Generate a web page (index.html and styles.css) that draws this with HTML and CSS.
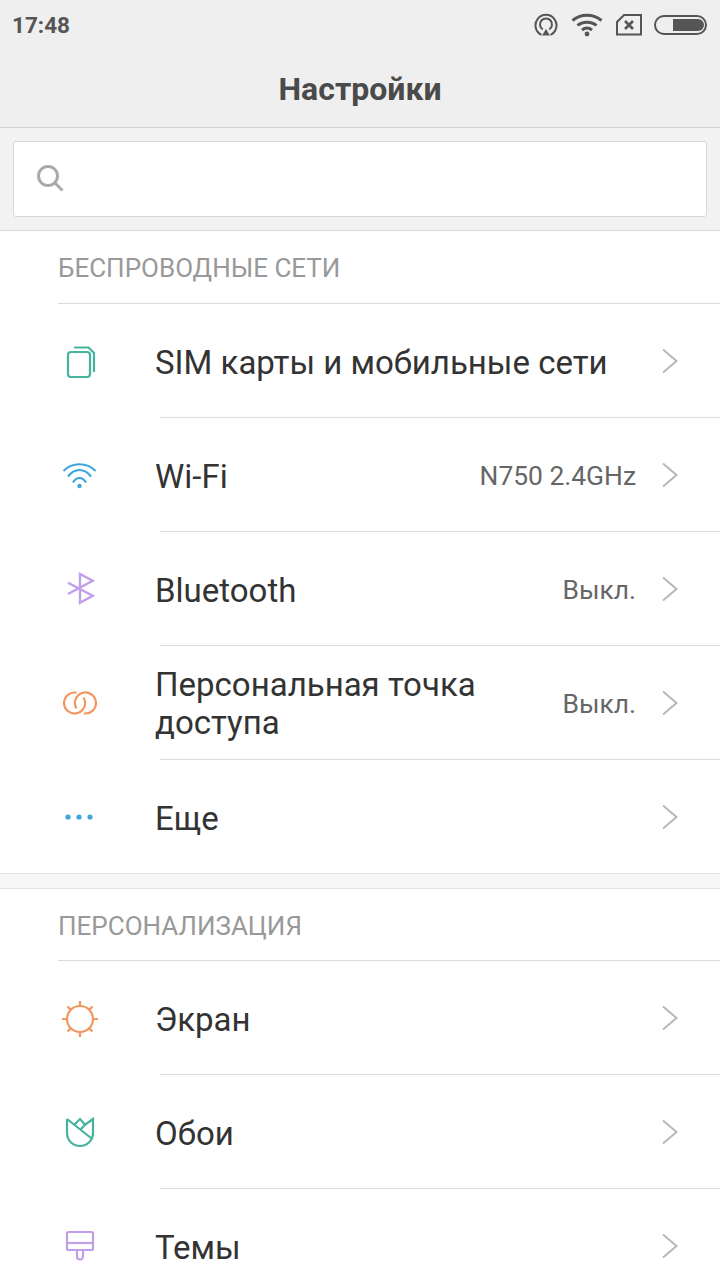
FILE: index.html
```html
<!DOCTYPE html>
<html lang="ru">
<head>
    <meta charset="UTF-8">
    <meta name="viewport" content="width=device-width, initial-scale=1.0">
    <title>Настройки</title>
    <link rel="stylesheet" href="styles.css">
</head>
<body>
    <div class="top">
        <div class="status">
            <span class="time">17:48</span>
            <div class="status-icons">
                <svg class="st-sync" width="24" height="24" viewBox="0 0 24 24" fill="none" stroke="#555" stroke-width="2">
                    <path d="M7.500 21.800A10.500 10.500 0 1 1 16.500 21.800"/>
                    <path d="M8.800 16.500A6 6 0 1 1 15.200 16.500"/>
                    <path d="M12 16l4 6.500H8z" fill="#555" stroke="none"/>
                </svg>
                <svg class="st-wifi" width="32" height="24" viewBox="0 0 32 24" fill="none" stroke="#555" stroke-width="3">
                    <path d="M1.500 7.500C9.500 .5 22.500 .5 30.500 7.500"/>
                    <path d="M6.500 12.500C11.500 8 20.500 8 25.500 12.500"/>
                    <path d="M11 17C14 14.600 18 14.600 21 17"/>
                    <circle cx="16" cy="21" r="2.400" fill="#555" stroke="none"/>
                </svg>
                <svg class="st-sim" width="26" height="22" viewBox="0 0 26 22" fill="none" stroke="#555" stroke-width="2">
                    <path d="M8 1H25V20.500H1V8z"/>
                    <path d="M9 7l8 8M17 7l-8 8" stroke-width="2.600"/>
                </svg>
                <div class="battery"><div class="battery-fill"></div></div>
            </div>
        </div>
        <h1 class="title">Настройки</h1>
    </div>

    <div class="search-wrap">
        <div class="search">
            <svg width="30" height="30" viewBox="0 0 30 30" fill="none" stroke="#aaa" stroke-width="3">
                <circle cx="12" cy="12" r="9.500"/>
                <path d="M19 19l7.500 7.500"/>
            </svg>
        </div>
    </div>

    <div class="section-title">БЕСПРОВОДНЫЕ СЕТИ</div>
    <div class="list">
        <div class="row">
            <svg class="icon" width="44" height="44" viewBox="0 0 44 44" fill="none" stroke="#45b39d" stroke-width="2.200">
                <rect x="10" y="13" width="22" height="25" rx="3"/>
                <path d="M16 8.500H30.500L36 14V33"/>
            </svg>
            <span class="name">SIM карты и мобильные сети</span>
            <svg class="arrow" width="18" height="26" viewBox="0 0 18 26"><path d="M2 1.500L15.500 13 2 24.500"/></svg>
        </div>
        <div class="row">
            <svg class="icon" width="44" height="44" viewBox="0 0 44 44" fill="none" stroke="#3ca6dc" stroke-width="2.200">
                <path d="M5.500 18C14 9 29 9 37.500 18"/>
                <path d="M10 23.500C16.500 14.800 26.500 14.800 33 23.500"/>
                <path d="M15 29.500C18.500 23.500 24.500 23.500 28 29.500"/>
                <circle cx="21.500" cy="33" r="2.200" fill="#3ca6dc" stroke="none"/>
            </svg>
            <span class="name">Wi-Fi</span>
            <span class="value">N750 2.4GHz</span>
            <svg class="arrow" width="18" height="26" viewBox="0 0 18 26"><path d="M2 1.500L15.500 13 2 24.500"/></svg>
        </div>
        <div class="row">
            <svg class="icon" width="44" height="44" viewBox="0 0 44 44" fill="none" stroke="#c09eea" stroke-width="2.400">
                <path d="M10 15.700L34.700 28.700 22 35.700V7L34.700 13.700 10 27"/>
            </svg>
            <span class="name">Bluetooth</span>
            <span class="value">Выкл.</span>
            <svg class="arrow" width="18" height="26" viewBox="0 0 18 26"><path d="M2 1.500L15.500 13 2 24.500"/></svg>
        </div>
        <div class="row">
            <svg class="icon" width="44" height="44" viewBox="0 0 44 44" fill="none" stroke="#f4965f" stroke-width="2.200">
                <path d="M18.500 11.700A10.500 10.500 0 1 0 25.500 16.500"/>
                <path d="M26 32.400A10.500 10.500 0 1 0 18.500 27.500"/>
            </svg>
            <span class="name name-two">Персональная точка<br>доступа</span>
            <span class="value">Выкл.</span>
            <svg class="arrow" width="18" height="26" viewBox="0 0 18 26"><path d="M2 1.500L15.500 13 2 24.500"/></svg>
        </div>
        <div class="row">
            <svg class="icon" width="44" height="44" viewBox="0 0 44 44" fill="#3ca6dc">
                <circle cx="10" cy="22" r="2.600"/>
                <circle cx="21" cy="22" r="2.600"/>
                <circle cx="32" cy="22" r="2.600"/>
            </svg>
            <span class="name">Еще</span>
            <svg class="arrow" width="18" height="26" viewBox="0 0 18 26"><path d="M2 1.500L15.500 13 2 24.500"/></svg>
        </div>
    </div>

    <div class="gap"></div>

    <div class="section-title section-second">ПЕРСОНАЛИЗАЦИЯ</div>
    <div class="list">
        <div class="row">
            <svg class="icon" width="44" height="44" viewBox="0 0 44 44" fill="none" stroke="#f4965f" stroke-width="2.200">
                <circle cx="22" cy="23" r="13"/>
                <path d="M22 5V10M22 36V41M4 23H9M35 23H40M9.500 10.500L13 14M31 32L34.500 35.500M34.500 10.500L31 14M13 32L9.500 35.500"/>
            </svg>
            <span class="name">Экран</span>
            <svg class="arrow" width="18" height="26" viewBox="0 0 18 26"><path d="M2 1.500L15.500 13 2 24.500"/></svg>
        </div>
        <div class="row">
            <svg class="icon" width="44" height="44" viewBox="0 0 44 44" fill="none" stroke="#45b39d" stroke-width="2.200">
                <path d="M9 9V23A13 13 0 0 0 35 23V9L27 14.700 22 9 16.300 14.700"/>
                <path d="M9 9L34.300 29M27 14.700L22 20"/>
            </svg>
            <span class="name">Обои</span>
            <svg class="arrow" width="18" height="26" viewBox="0 0 18 26"><path d="M2 1.500L15.500 13 2 24.500"/></svg>
        </div>
        <div class="row">
            <svg class="icon" width="44" height="44" viewBox="0 0 44 44" fill="none" stroke="#c09eea" stroke-width="2.200">
                <rect x="9" y="8" width="26" height="18" rx="1.500"/>
                <path d="M9 19H35"/>
                <path d="M19 26V32.500A3 3 0 0 0 25 32.500V26"/>
            </svg>
            <span class="name">Темы</span>
            <svg class="arrow" width="18" height="26" viewBox="0 0 18 26"><path d="M2 1.500L15.500 13 2 24.500"/></svg>
        </div>
    </div>
</body>
</html>
```
FILE: styles.css
```css
html, body {
    height: 100%;
}
body {
    margin: 0;
    height: 1280px;
    overflow: hidden;
    background: white;
    font-family: Roboto, sans-serif;
    color: #333;
}
.top {
    height: 127px;
    background: #efefef;
    border-bottom: 1px solid #cfcfcf;
}
.status {
    display: flex;
    justify-content: space-between;
    align-items: center;
    height: 50px;
    padding: 0 13px;
}
.time {
    margin-left: -1px;
    font-size: 22.500px;
    font-weight: 700;
    color: #555;
}
.status-icons {
    display: flex;
    align-items: center;
}
.st-wifi {
    margin-left: 13px;
}
.st-sim {
    margin-left: 13px;
}
.battery {
    box-sizing: border-box;
    width: 53px;
    height: 20px;
    margin-left: 12px;
    padding: 2px 1px 2px 17px;
    border: 2px solid #555;
    border-radius: 10px;
}
.battery-fill {
    height: 100%;
    background: #555;
    border-radius: 0 7px 7px 0;
}
.title {
    margin: 0;
    height: 77px;
    padding-top: 1px;
    line-height: 77px;
    text-align: center;
    font-size: 32px;
    font-weight: 700;
    color: #4a4a4a;
}
.search-wrap {
    padding: 13px 13px;
    background: #f2f2f2;
    border-bottom: 1px solid #dcdcdc;
}
.search {
    box-sizing: border-box;
    display: flex;
    align-items: center;
    height: 76px;
    padding-left: 22px;
    background: white;
    border: 1px solid #d8d8d8;
    border-radius: 3px;
}
.section-title {
    box-sizing: border-box;
    height: 73px;
    margin-left: 58px;
    padding-top: 22px;
    font-size: 26px;
    line-height: 30px;
    color: #999;
    border-bottom: 1px solid #dcdcdc;
}
.section-second {
    height: 72px;
}
.row {
    position: relative;
    box-sizing: border-box;
    display: flex;
    align-items: center;
    height: 114px;
    padding-left: 58px;
    padding-right: 41px;
}
.row + .row::before {
    content: "";
    position: absolute;
    top: -1px;
    left: 160px;
    right: 0;
    height: 1px;
    background: #dcdcdc;
}
.icon {
    flex: none;
    margin-right: 53px;
}
.name {
    flex: 1;
    padding-top: 4px;
    font-size: 33px;
    line-height: 38px;
    color: #333;
}
.name-two {
    padding-top: 2px;
}
.value {
    padding-top: 2px;
    font-size: 26.400px;
    color: #666;
    margin-right: 25px;
}
.arrow {
    flex: none;
    fill: none;
    stroke: #b8b8b8;
    stroke-width: 2;
}
.gap {
    height: 14px;
    background: #f6f6f6;
    border-top: 1px solid #e2e2e2;
    border-bottom: 1px solid #e2e2e2;
    margin-top: -1px;
}
```
